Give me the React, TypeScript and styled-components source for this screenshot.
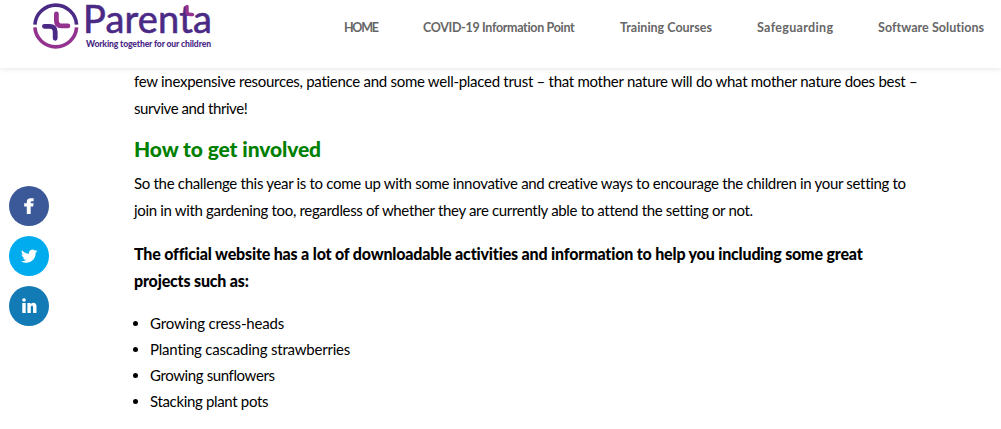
import styled, { createGlobalStyle } from 'styled-components';

const GlobalStyle = createGlobalStyle`
  :root {
    --brand-color: #4b2a86;
    --brand-accent-color: #93338f;
    --nav-color: #666;
    --heading-color: #008000;
  }

  * {
    box-sizing: border-box;
    margin: 0;
    padding: 0;
  }

  body {
    background: #fff;
    color: #000;
    font-family: Lato, 'Liberation Sans', sans-serif;
    font-size: 15px;
    overflow: hidden;
  }
`;

const Header = styled.header`
  display: flex;
  justify-content: space-between;
  height: 68px;
  padding: 0 17px 0 30px;
  background: #fff;
  box-shadow: 0 1px 5px rgba(0, 0, 0, 0.1);
`;

const Logo = styled.svg`
  width: 190px;
  height: 56px;
  flex-shrink: 0;
  overflow: visible;
`;

const Nav = styled.nav`
  display: flex;
  gap: 45px;
  padding-top: 19px;
`;

const NavLink = styled.a<{ $width: number; $tracking: number }>`
  width: ${({ $width }) => $width}px;
  color: var(--nav-color);
  font-size: 12.5px;
  font-weight: 700;
  line-height: 18px;
  letter-spacing: ${({ $tracking }) => $tracking}px;
  white-space: nowrap;
`;

const Body = styled.div`
  display: flex;
`;

const Social = styled.aside`
  display: flex;
  flex-direction: column;
  gap: 10px;
  width: 134px;
  padding: 118px 0 0 9px;
  flex-shrink: 0;
`;

const SocialButton = styled.a<{ $color: string }>`
  display: flex;
  width: 40px;
  height: 40px;
  border-radius: 50%;
  background: ${({ $color }) => $color};

  svg {
    width: 40px;
    height: 40px;
    fill: #fff;
  }
`;

const Article = styled.main`
  flex: 1;
`;

const Paragraph = styled.p<{ $bold?: boolean }>`
  padding-bottom: 16px;
  font-size: ${({ $bold }) => ($bold ? 16 : 15)}px;
  font-weight: ${({ $bold }) => ($bold ? 900 : 400)};
  line-height: 27px;
`;

const Line = styled.span<{ $tracking: number }>`
  display: block;
  letter-spacing: ${({ $tracking }) => $tracking}px;
  white-space: nowrap;
`;

const Heading = styled.h2`
  padding-bottom: 10px;
  color: var(--heading-color);
  font-size: 21px;
  font-weight: 900;
  letter-spacing: -0.1px;
  line-height: 22px;
`;

const List = styled.ul`
  padding-left: 16px;
  line-height: 26px;
  list-style: none;

  li {
    position: relative;
  }

  li::before {
    content: '';
    position: absolute;
    top: 11px;
    left: -17px;
    width: 5px;
    height: 5px;
    border-radius: 50%;
    background: #000;
  }
`;

const links = [
  { label: 'HOME', width: 34, tracking: -1.3 },
  { label: 'COVID-19 Information Point', width: 152, tracking: -0.33 },
  { label: 'Training Courses', width: 92, tracking: 0 },
  { label: 'Safeguarding', width: 76, tracking: 0.33 },
  { label: 'Software Solutions', width: 106, tracking: 0.05 },
];

const activities = [
  { label: 'Growing cress-heads', tracking: -0.16 },
  { label: 'Planting cascading strawberries', tracking: -0.21 },
  { label: 'Growing sunflowers', tracking: -0.39 },
  { label: 'Stacking plant pots', tracking: -0.34 },
];

function ParentaLogo() {
  return (
    <Logo viewBox='30 0 190 56'>
      <g fill='none' strokeWidth='3.6'>
        <path d='M34.9 24.6A20.9 20.9 0 0 1 76.6 24.6' stroke='#4b2a86' />
        <path d='M34.9 27.4A20.9 20.9 0 0 0 76.6 27.4' stroke='#93338f' />
      </g>
      <g fill='none' strokeWidth='4.8' strokeLinecap='round'>
        <path d='M56.4 14V20.4Q56.4 25.9 61.9 25.9H67.9' stroke='#93338f' />
        <path d='M44.4 26.3H49.7Q55.2 26.3 55.2 31.8V38.3' stroke='#4b2a86' />
      </g>
      <text
        x='83'
        y='33.3'
        fontSize='38'
        fill='#4b2a86'
        stroke='#4b2a86'
        strokeWidth='0.6'
        textLength='129'
      >
        Parenta
      </text>
      <path
        d='M187 6.4V11.5Q187 14.6 190.2 14.6H192.6'
        fill='none'
        stroke='#93338f'
        strokeWidth='3.4'
        strokeLinecap='round'
      />
      <text
        x='86'
        y='46.5'
        fontSize='8.6'
        fontWeight='900'
        fill='#4b2a86'
        textLength='125'
      >
        Working together for our children
      </text>
    </Logo>
  );
}

export default function App() {
  return (
    <>
      <GlobalStyle />
      <Header>
        <ParentaLogo />
        <Nav>
          {links.map(({ label, width, tracking }) => (
            <NavLink key={label} $width={width} $tracking={tracking}>
              {label}
            </NavLink>
          ))}
        </Nav>
      </Header>
      <Body>
        <Social>
          <SocialButton $color='#3b5998'>
            <svg viewBox='0 0 40 40'>
              <path d='M17.8 28V20.5H15.2V17.2H17.8V15.9Q17.8 12.2 21.6 12.2H24.6V15.3H22.9Q21.7 15.3 21.7 16.4V17.2H24.6L24.2 20.5H21.7V28Z' />
            </svg>
          </SocialButton>
          <SocialButton $color='#00aced'>
            <svg viewBox='0 0 40 40'>
              <g transform='translate(12 12) scale(0.68)'>
                <path d='M23.95 4.57a10 10 0 0 1-2.82.77 4.96 4.96 0 0 0 2.16-2.72c-.95.55-2 .95-3.13 1.18a4.92 4.92 0 0 0-8.38 4.48C7.69 8.1 4.07 6.13 1.64 3.16a4.92 4.92 0 0 0 1.52 6.57 4.9 4.9 0 0 1-2.23-.61v.06a4.92 4.92 0 0 0 3.95 4.83 5 5 0 0 1-2.21.08 4.94 4.94 0 0 0 4.6 3.42A9.87 9.87 0 0 1 0 19.54a13.99 13.99 0 0 0 7.55 2.21c9.05 0 14-7.5 14-13.99 0-.21 0-.42-.02-.63a9.94 9.94 0 0 0 2.42-2.56z' />
              </g>
            </svg>
          </SocialButton>
          <SocialButton $color='#127bb6'>
            <svg viewBox='0 0 40 40'>
              <circle cx='15' cy='14' r='1.8' />
              <path d='M13.3 17H16.7V27H13.3ZM18.4 17H21.6V18.3Q22.6 16.7 24.3 16.7Q27.5 16.7 27.5 20.8V27H24.1V21.6Q24.1 19.6 23 19.6Q21.8 19.6 21.8 21.6V27H18.4Z' />
            </svg>
          </SocialButton>
        </Social>
        <Article>
          <Paragraph>
            <Line $tracking={-0.28}>
              few inexpensive resources, patience and some well-placed trust –
              that mother nature will do what mother nature does best –
            </Line>
            <Line $tracking={-0.42}>survive and thrive!</Line>
          </Paragraph>
          <Heading>How to get involved</Heading>
          <Paragraph>
            <Line $tracking={-0.31}>
              So the challenge this year is to come up with some innovative and
              creative ways to encourage the children in your setting to
            </Line>
            <Line $tracking={-0.33}>
              join in with gardening too, regardless of whether they are
              currently able to attend the setting or not.
            </Line>
          </Paragraph>
          <Paragraph $bold>
            <Line $tracking={-0.18}>
              The official website has a lot of downloadable activities and
              information to help you including some great
            </Line>
            <Line $tracking={-0.18}>projects such as:</Line>
          </Paragraph>
          <List>
            {activities.map(({ label, tracking }) => (
              <li key={label}>
                <Line $tracking={tracking}>{label}</Line>
              </li>
            ))}
          </List>
        </Article>
      </Body>
    </>
  );
}
